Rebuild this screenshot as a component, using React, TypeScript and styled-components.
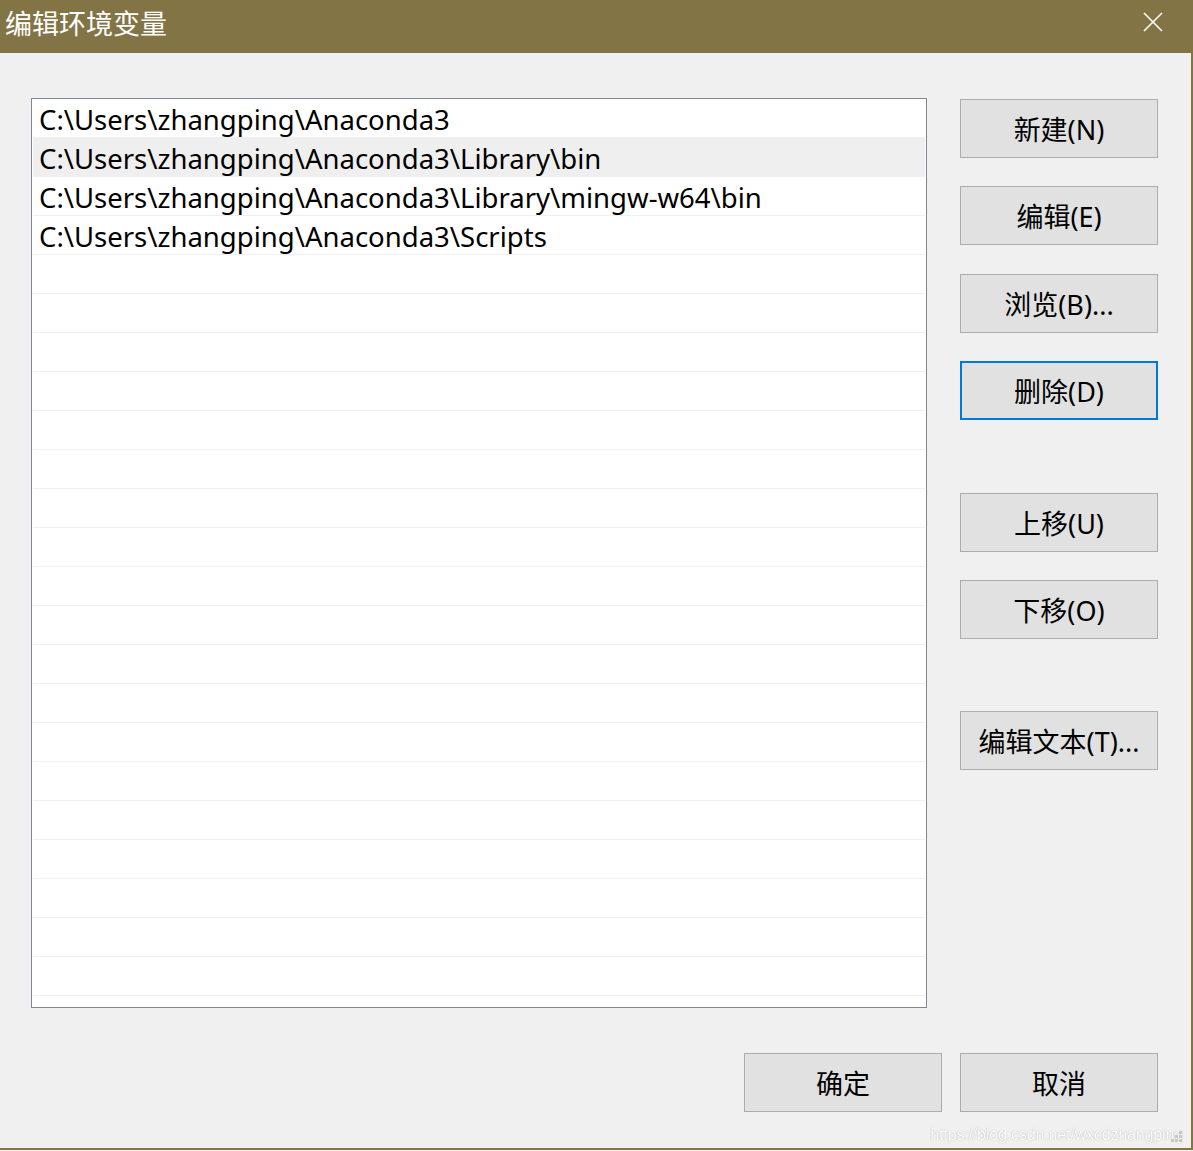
import * as React from 'react';
import styled, { createGlobalStyle } from 'styled-components';

const TitleBarHeight = 53;
const RowHeight = 39;
const RowCount = 23;

const paths = [
    'C:\\Users\\zhangping\\Anaconda3',
    'C:\\Users\\zhangping\\Anaconda3\\Library\\bin',
    'C:\\Users\\zhangping\\Anaconda3\\Library\\mingw-w64\\bin',
    'C:\\Users\\zhangping\\Anaconda3\\Scripts',
];

const GlobalStyle = createGlobalStyle`
    html, body {
        margin: 0;
        padding: 0;
        background: #f0f0f0;
    }
    body {
        font-family: "Noto Sans", "Noto Sans CJK SC", sans-serif;
    }
`;

const Window = styled.div`
    position: relative;
    width: 1193px;
    height: 1150px;
    box-sizing: border-box;
    display: flex;
    flex-direction: column;
    background: #f0f0f0;
    border-right: 2px solid #837446;
    border-bottom: 2px solid #837446;
`;

const TitleBar = styled.div`
    height: ${TitleBarHeight + 'px'};
    margin-right: -2px;
    background: #837446;
    display: flex;
    align-items: center;
    justify-content: space-between;
    padding: 0 30px 0 5px;
    color: #fff;
`;

const Title = styled.span`
    font-family: "Noto Sans CJK SC", sans-serif;
    font-size: 27px;
    margin-top: -8px;
`;

const CloseIcon = styled.svg`
    width: 20px;
    height: 20px;
    margin-top: -10px;
`;

const Body = styled.div`
    flex-grow: 1;
    display: flex;
    flex-direction: column;
    padding: 45px 33px 0 31px;
`;

const MainRow = styled.div`
    display: flex;
    gap: 33px;
`;

const ListBox = styled.div`
    width: 896px;
    height: 910px;
    box-sizing: border-box;
    border: 1px solid #828790;
    background: #fff;
    padding: 0 1px;
    overflow: hidden;
`;

const Row = styled.div<{ $selected?: boolean }>`
    height: ${RowHeight + 'px'};
    box-sizing: border-box;
    display: flex;
    align-items: center;
    padding: 2px 0 0 6px;
    border-bottom: 1px solid #f0f0f0;
    background: ${props => props.$selected ? '#efefef' : '#fff'};
    font-size: 27.5px;
    color: #000;
    white-space: nowrap;
`;

const ButtonColumn = styled.div`
    display: flex;
    flex-direction: column;
    padding-top: 1px;
`;

const Button = styled.div<{ $mt?: number; $focused?: boolean }>`
    width: 198px;
    height: 59px;
    box-sizing: border-box;
    margin-top: ${props => (props.$mt || 0) + 'px'};
    display: flex;
    align-items: center;
    justify-content: center;
    background: #e1e1e1;
    border: ${props => props.$focused ? '2px solid #0078d7' : '1px solid #adadad'};
    font-size: 27px;
    color: #000;
`;

const Footer = styled.div`
    display: flex;
    justify-content: flex-end;
    gap: 18px;
    margin-top: 45px;
`;

const Watermark = styled.span`
    position: absolute;
    right: 8px;
    bottom: 4px;
    font-family: "Liberation Sans", Arial, sans-serif;
    font-size: 16px;
    letter-spacing: -0.15px;
    color: #ffffff;
    text-shadow: 0 0 1px rgba(0, 0, 0, 0.35);
`;

const Grip = styled.svg`
    position: absolute;
    right: 8px;
    bottom: 5px;
    width: 14px;
    height: 14px;
`;

const sideButtons = [
    { label: '新建(N)', mt: 0 },
    { label: '编辑(E)', mt: 28 },
    { label: '浏览(B)...', mt: 29 },
    { label: '删除(D)', mt: 28, focused: true },
    { label: '上移(U)', mt: 73 },
    { label: '下移(O)', mt: 28 },
    { label: '编辑文本(T)...', mt: 72 },
];

const App: React.FC = () => {
    const rows = Array.from({ length: RowCount }, (_, i) => paths[i] || '');

    return (
        <>
            <GlobalStyle />
            <Window>
                <TitleBar>
                    <Title>编辑环境变量</Title>
                    <CloseIcon viewBox="0 0 20 20">
                        <path d="M1 1 L19 19 M19 1 L1 19" stroke="#fff" strokeWidth="1.6" fill="none" />
                    </CloseIcon>
                </TitleBar>

                <Body>
                    <MainRow>
                        <ListBox>
                            {rows.map((text, i) => (
                                <Row key={i} $selected={i === 1}>{text}</Row>
                            ))}
                        </ListBox>

                        <ButtonColumn>
                            {sideButtons.map(btn => (
                                <Button key={btn.label} $mt={btn.mt} $focused={btn.focused}>
                                    {btn.label}
                                </Button>
                            ))}
                        </ButtonColumn>
                    </MainRow>

                    <Footer>
                        <Button>确定</Button>
                        <Button>取消</Button>
                    </Footer>
                </Body>

                <Watermark>https://blog.csdn.net/wxcdzhangping</Watermark>
                <Grip viewBox="0 0 14 14">
                    <rect x="10" y="2" width="3" height="3" fill="#c8c8c8" />
                    <rect x="6" y="6" width="3" height="3" fill="#c8c8c8" />
                    <rect x="10" y="6" width="3" height="3" fill="#c8c8c8" />
                    <rect x="2" y="10" width="3" height="3" fill="#c8c8c8" />
                    <rect x="6" y="10" width="3" height="3" fill="#c8c8c8" />
                    <rect x="10" y="10" width="3" height="3" fill="#c8c8c8" />
                </Grip>
            </Window>
        </>
    );
};

export default App;
